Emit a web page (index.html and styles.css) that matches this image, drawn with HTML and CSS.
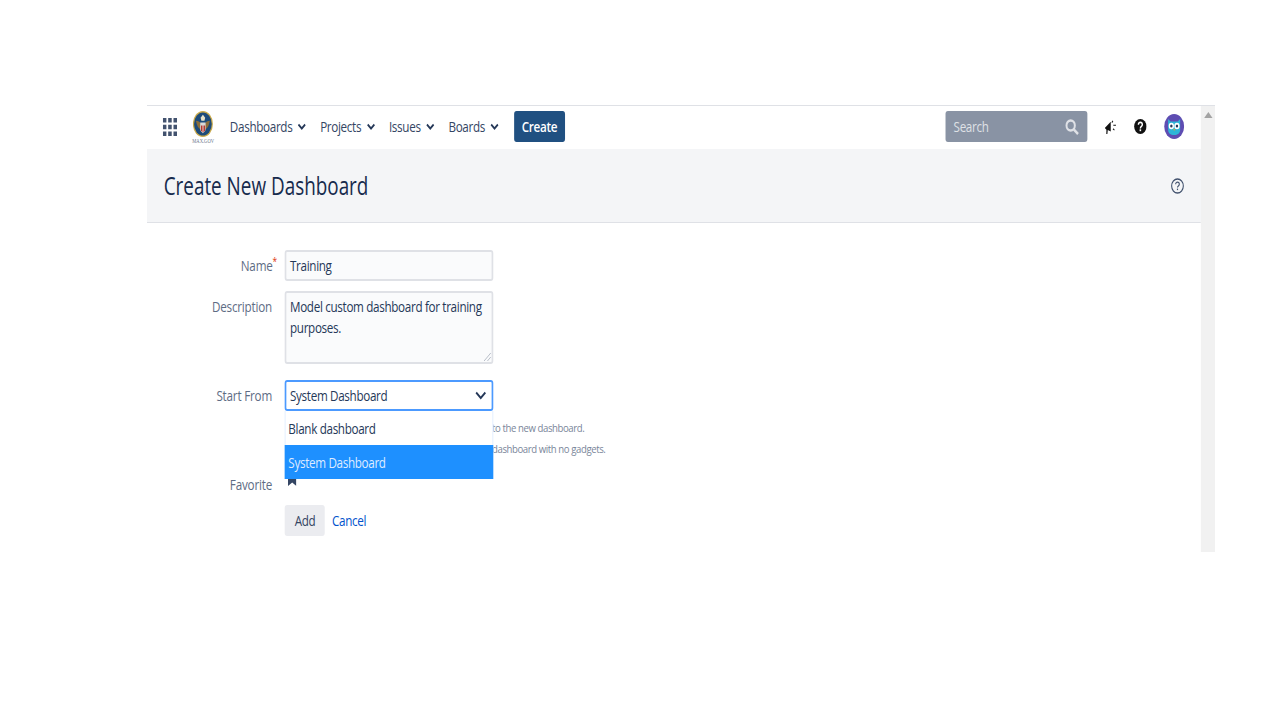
FILE: index.html
```html
<!DOCTYPE html>
<html lang="en">
<head>
<meta charset="UTF-8">
<title>Create New Dashboard</title>
<link rel="stylesheet" href="styles.css">
</head>
<body>

<div class="frame">
  <div class="main">
    <nav class="topbar">
      <svg class="apps" width="17" height="18" viewBox="0 0 18 18" preserveAspectRatio="none" fill="#42526e">
        <rect x="0" y="0" width="4.500" height="4.500"/><rect x="6.750" y="0" width="4.500" height="4.500"/><rect x="13.500" y="0" width="4.500" height="4.500"/>
        <rect x="0" y="6.750" width="4.500" height="4.500"/><rect x="6.750" y="6.750" width="4.500" height="4.500"/><rect x="13.500" y="6.750" width="4.500" height="4.500"/>
        <rect x="0" y="13.500" width="4.500" height="4.500"/><rect x="6.750" y="13.500" width="4.500" height="4.500"/><rect x="13.500" y="13.500" width="4.500" height="4.500"/>
      </svg>
      <div class="logo">
        <svg width="24" height="26" viewBox="0 0 26 27" preserveAspectRatio="none">
          <ellipse cx="13" cy="13.5" rx="13" ry="13.5" fill="#c9a94a"/>
          <ellipse cx="13" cy="13.5" rx="11.5" ry="12" fill="#1d4b7a"/>
          <path d="M13 4l3 3-1 3h-4l-1-3z" fill="#e8e2c8"/>
          <path d="M4 10c3 0 5 1 6 3h6c1-2 3-3 6-3-1 5-3 8-6 9h-6c-3-1-5-4-6-9z" fill="#8a6d3b"/>
          <path d="M9.500 12h7v7c0 2-2 3-3.500 4-1.500-1-3.500-2-3.500-4z" fill="#d9d9d9"/>
          <path d="M10.500 15h1.300v6h-1.300zM12.500 15h1.300v7h-1.300zM14.500 15h1.300v6h-1.300z" fill="#b8322a"/>
        </svg>
        <span class="logo-text">MAX.GOV</span>
      </div>
      <a class="nav-item">Dashboards <svg class="chev" width="11" height="8" viewBox="0 0 11 8"><path d="M1.500 1.500l4 4 4-4" fill="none" stroke="#253858" stroke-width="2"/></svg></a>
      <a class="nav-item">Projects <svg class="chev" width="11" height="8" viewBox="0 0 11 8"><path d="M1.500 1.500l4 4 4-4" fill="none" stroke="#253858" stroke-width="2"/></svg></a>
      <a class="nav-item">Issues <svg class="chev" width="11" height="8" viewBox="0 0 11 8"><path d="M1.500 1.500l4 4 4-4" fill="none" stroke="#253858" stroke-width="2"/></svg></a>
      <a class="nav-item">Boards <svg class="chev" width="11" height="8" viewBox="0 0 11 8"><path d="M1.500 1.500l4 4 4-4" fill="none" stroke="#253858" stroke-width="2"/></svg></a>
      <button class="create-btn">Create</button>
      <div class="spacer"></div>
      <div class="search">
        <span>Search</span>
        <svg width="19" height="16" viewBox="0 0 19 16"><circle cx="8" cy="6.500" r="5" fill="none" stroke="#dfe1e6" stroke-width="2.400"/><path d="M11.800 10.500l5 4.500" stroke="#dfe1e6" stroke-width="2.800"/></svg>
      </div>
      <svg class="tool" width="16" height="16" viewBox="0 0 18 18" preserveAspectRatio="none">
        <path d="M1 10l8-7v11l-4-1.500-.5 4.500H3l.2-5z" fill="#111"/>
        <path d="M12 2l-1.500 2M12.500 7H16M12 11l2 1.500" stroke="#111" stroke-width="1.300"/>
      </svg>
      <svg class="tool" width="15" height="15" viewBox="0 0 16 16" preserveAspectRatio="none">
        <circle cx="8" cy="8" r="8" fill="#111"/>
        <path d="M5.500 6c0-3.300 5-3.300 5 0 0 2-2.500 1.800-2.500 4" fill="none" stroke="#fff" stroke-width="1.800"/>
        <rect x="7" y="11" width="2" height="2" fill="#fff"/>
      </svg>
      <svg class="tool" width="24" height="25" viewBox="0 0 25 25" preserveAspectRatio="none">
        <circle cx="12.500" cy="12.500" r="12.500" fill="#5e4db2"/>
        <path d="M5 5l3 2.500h9L20 5v11c0 3-3 5-7.500 5S5 19 5 16z" fill="#2eb5d8"/>
        <circle cx="9" cy="12" r="3.300" fill="#fff"/><circle cx="16" cy="12" r="3.300" fill="#fff"/>
        <circle cx="9" cy="12" r="1.500" fill="#253858"/><circle cx="16" cy="12" r="1.500" fill="#253858"/>
        <path d="M11.500 15h2l-1 2z" fill="#ffab00"/>
      </svg>
    </nav>

    <header class="page-head">
      <h1>Create New Dashboard</h1>
      <svg width="16" height="16" viewBox="0 0 16 16">
        <circle cx="8" cy="8" r="7" fill="none" stroke="#42526e" stroke-width="1.300"/>
        <path d="M5.800 6.300c0-2.800 4.400-2.800 4.400 0 0 1.700-2.200 1.600-2.200 3.300" fill="none" stroke="#42526e" stroke-width="1.300"/>
        <rect x="7.300" y="10.600" width="1.400" height="1.500" fill="#42526e"/>
      </svg>
    </header>

    <form class="form">
      <div class="row">
        <label>Name<sup class="req">*</sup></label>
        <div class="field input">Training</div>
      </div>
      <div class="row row-desc">
        <label>Description</label>
        <div class="field textarea">Model custom dashboard for training purposes.
          <svg class="grip" width="10" height="10" viewBox="0 0 10 10"><path d="M9 1L1 9M9 5L5 9" stroke="#b3bac5"/></svg>
        </div>
      </div>
      <div class="row row-select">
        <label>Start From</label>
        <div class="select-wrap">
          <div class="field select">
            <span>System Dashboard</span>
            <svg width="14" height="9" viewBox="0 0 14 9"><path d="M1.500 1.500L7 7l5.500-5.500" fill="none" stroke="#253858" stroke-width="2.200"/></svg>
          </div>
          <ul class="menu">
            <li>Blank dashboard</li>
            <li class="active">System Dashboard</li>
          </ul>
        </div>
      </div>
      <div class="hints">
        <p>to the new dashboard.</p>
        <p>dashboard with no gadgets.</p>
      </div>
      <div class="row row-fav">
        <label>Favorite</label>
        <svg class="fav" width="10" height="10" viewBox="0 0 9 10" preserveAspectRatio="none"><path d="M0 0h9v10L4.500 6.500 0 10z" fill="#344563"/></svg>
      </div>
      <div class="actions">
        <button type="button" class="add-btn">Add</button>
        <a class="cancel">Cancel</a>
      </div>
    </form>
  </div>

  <div class="scrollbar"><span class="arrow"></span></div>
</div>

</body>
</html>
```

FILE: styles.css
```css
html, body {
  margin: 0;
  height: 720px;
  overflow: hidden;
  background-color: #fff;
}
body {
  padding-top: 105px;
  box-sizing: border-box;
  font-family: 'Open Sans', 'Noto Sans', sans-serif;
  font-size: 14px;
  letter-spacing: -0.4px;
  color: #172b4d;
}

/* the whole capture is squeezed sideways, icons too */
.frame {
  display: flex;
  width: 1280px;
  height: 447px;
  border-top: 1px solid #dfe1e6;
  box-sizing: border-box;
  transform: translateX(147px) scaleX(0.8344);
  transform-origin: 0 0;
}
.main {
  flex: 1;
  min-width: 0;
}
.scrollbar {
  width: 16.800px;
  background-color: #f1f1f1;
  display: flex;
  justify-content: center;
  padding-top: 6px;
  box-sizing: border-box;
}
.arrow {
  width: 0;
  height: 0;
  border-left: 5px solid transparent;
  border-right: 5px solid transparent;
  border-bottom: 6px solid #a3a3a3;
}

.topbar {
  display: flex;
  align-items: center;
  height: 43px;
  padding: 0 20.400px 2px 19px;
  box-sizing: border-box;
  background-color: #fff;
}
.apps {
  margin-right: 19.300px;
}
.logo {
  width: 24px;
  margin: 2px 20px 0 0;
  display: flex;
  flex-direction: column;
  align-items: center;
}
.logo-text {
  font-family: 'Liberation Serif', serif;
  font-size: 5.500px;
  line-height: 8px;
  letter-spacing: 0;
  color: #6b778c;
  white-space: nowrap;
}
.nav-item {
  display: flex;
  align-items: center;
  gap: 6px;
  margin-right: 16.300px;
  color: #344563;
  white-space: nowrap;
}
.create-btn {
  width: 61px;
  height: 31px;
  margin-left: 1.500px;
  padding: 0;
  font: 600 14px 'Open Sans', sans-serif;
  letter-spacing: -0.4px;
  color: #fff;
  background-color: #205081;
  border: none;
  border-radius: 3px;
}
.spacer {
  flex: 1;
}
.search {
  width: 170px;
  height: 31px;
  padding: 0 9px 0 10px;
  box-sizing: border-box;
  display: flex;
  align-items: center;
  justify-content: space-between;
  color: #dfe1e6;
  background-color: #8993a4;
  border-radius: 3px;
}
.tool {
  margin-left: 20.400px;
}

.page-head {
  display: flex;
  align-items: center;
  justify-content: space-between;
  height: 74px;
  padding: 0 20px 0 20px;
  box-sizing: border-box;
  background-color: #f4f5f7;
  border-bottom: 1px solid #dfe1e6;
}
h1 {
  margin: 0 0 1px;
  font-size: 25px;
  font-weight: 500;
  letter-spacing: 0;
  color: #172b4d;
  transform: scaleX(0.905);
  transform-origin: 0 50%;
}

.form {
  padding-top: 27px;
}
.row {
  display: flex;
}
.row label {
  width: 149.800px;
  margin-right: 15.600px;
  text-align: right;
  letter-spacing: -0.25px;
  color: #5e6c84;
  line-height: 31px;
}
.req {
  margin-right: -6px;
  color: #de350b;
  font-size: 10px;
  line-height: 0;
}
.field {
  width: 249.300px;
  box-sizing: border-box;
  padding: 0 4px;
  background-color: #fafbfc;
  border: 2px solid #dfe1e6;
  border-radius: 3px;
  color: #253858;
  line-height: 21px;
}
.input {
  height: 31px;
  line-height: 27px;
}
.row-desc {
  margin-top: 10px;
}
.textarea {
  position: relative;
  height: 73px;
  padding-top: 3px;
}
.grip {
  position: absolute;
  right: 0;
  bottom: 0;
}
.row-select {
  margin-top: 16px;
}
.select-wrap {
  position: relative;
}
.select {
  display: flex;
  align-items: center;
  justify-content: space-between;
  height: 31px;
  padding-right: 6px;
  background-color: #fff;
  border-color: #4c9aff;
}
.menu {
  position: absolute;
  top: 31px;
  left: 0;
  width: 249.300px;
  margin: 0;
  padding: 0;
  list-style: none;
  box-sizing: border-box;
  background-color: #fff;
  border-left: 1px solid #deebff;
  border-right: 1px solid #deebff;
}
.menu li {
  height: 34px;
  line-height: 35px;
  padding-left: 3px;
  color: #253858;
}
.menu li.active {
  margin: 0 -1px;
  padding-left: 4px;
  color: #deebff;
  background-color: #1e90ff;
}
.hints {
  margin-top: 6px;
  padding-left: 413.500px;
  font-size: 11.500px;
  letter-spacing: -0.5px;
  line-height: 21px;
  color: #7a869a;
}
.hints p {
  margin: 0;
}
.row-fav {
  margin-top: 16px;
  height: 20px;
}
.row-fav label {
  line-height: 20px;
}
.fav {
  margin: 1px 0 0 3.600px;
}
.actions {
  display: flex;
  align-items: center;
  gap: 8.400px;
  margin: 10px 0 0 165.400px;
}
.add-btn {
  width: 48px;
  height: 31px;
  padding: 0;
  font: 14px 'Open Sans', sans-serif;
  letter-spacing: -0.4px;
  color: #344563;
  background-color: #ebecf0;
  border: none;
  border-radius: 3px;
}
.cancel {
  color: #0052cc;
}
```
